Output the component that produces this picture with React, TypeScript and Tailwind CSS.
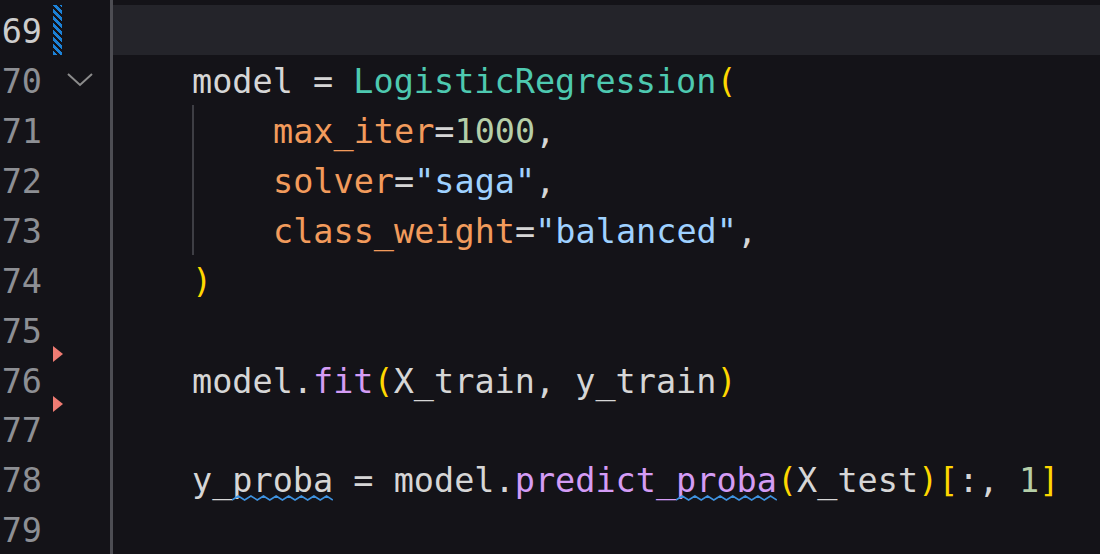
import React from 'react';

type Tok = { t: string; c?: string; squiggle?: boolean };

const C = {
  text: 'text-[#d6d6d6]',
  cls: 'text-[#4ec9b0]',
  paren: 'text-[#ffd700]',
  param: 'text-[#f29b5c]',
  num: 'text-[#b5cea8]',
  str: 'text-[#9fd1ff]',
  fn: 'text-[#d49cf5]',
};

interface Line {
  no: number;
  toks: Tok[];
  guide?: boolean;
}

const lines: Line[] = [
  { no: 69, toks: [] },
  {
    no: 70,
    toks: [
      { t: 'model = ', c: C.text },
      { t: 'LogisticRegression', c: C.cls },
      { t: '(', c: C.paren },
    ],
  },
  {
    no: 71,
    guide: true,
    toks: [
      { t: 'max_iter', c: C.param },
      { t: '=', c: C.text },
      { t: '1000', c: C.num },
      { t: ',', c: C.text },
    ],
  },
  {
    no: 72,
    guide: true,
    toks: [
      { t: 'solver', c: C.param },
      { t: '=', c: C.text },
      { t: '"saga"', c: C.str },
      { t: ',', c: C.text },
    ],
  },
  {
    no: 73,
    guide: true,
    toks: [
      { t: 'class_weight', c: C.param },
      { t: '=', c: C.text },
      { t: '"balanced"', c: C.str },
      { t: ',', c: C.text },
    ],
  },
  { no: 74, toks: [{ t: ')', c: C.paren }] },
  { no: 75, toks: [] },
  {
    no: 76,
    toks: [
      { t: 'model.', c: C.text },
      { t: 'fit', c: C.fn },
      { t: '(', c: C.paren },
      { t: 'X_train, y_train', c: C.text },
      { t: ')', c: C.paren },
    ],
  },
  { no: 77, toks: [] },
  {
    no: 78,
    toks: [
      { t: 'y_', c: C.text },
      { t: 'proba', c: C.text, squiggle: true },
      { t: ' = model.', c: C.text },
      { t: 'predict_', c: C.fn },
      { t: 'proba', c: C.fn, squiggle: true },
      { t: '(', c: C.paren },
      { t: 'X_test', c: C.text },
      { t: ')', c: C.paren },
      { t: '[', c: C.paren },
      { t: ':, ', c: C.text },
      { t: '1', c: C.num },
      { t: ']', c: C.paren },
    ],
  },
  { no: 79, toks: [] },
];

function Squiggle() {
  return (
    <svg className="absolute left-0 right-0 bottom-[-3px] w-full h-[6px]" preserveAspectRatio="none" viewBox="0 0 100 6">
      <path
        d="M0 5 L6.25 1 L12.5 5 L18.75 1 L25 5 L31.25 1 L37.5 5 L43.75 1 L50 5 L56.25 1 L62.5 5 L68.75 1 L75 5 L81.25 1 L87.5 5 L93.75 1 L100 5"
        fill="none"
        stroke="#3f93e0"
        strokeWidth="1.5"
        vectorEffect="non-scaling-stroke"
      />
    </svg>
  );
}

function Chevron() {
  return (
    <svg width="26" height="14" viewBox="0 0 26 14" className="text-[#8c8c8c]">
      <path d="M1 1 L13 12 L25 1" fill="none" stroke="currentColor" strokeWidth="2" />
    </svg>
  );
}

function Triangle() {
  return <div className="w-0 h-0 border-y-[8px] border-y-transparent border-l-[10px] border-l-[#ef7b72]" />;
}

export default function App() {
  return (
    <div
      className="w-[1100px] h-[554px] overflow-hidden bg-[#141318] flex pt-[5px]"
      style={{ fontFamily: '"DejaVu Sans Mono", "Liberation Mono", monospace' }}
    >
      {/* gutter */}
      <div className="w-[110px] shrink-0 flex flex-col">
        {lines.map((ln) => (
          <div key={ln.no} className="relative h-[50px] flex items-center">
            <span
              className={`w-[42px] pt-[4px] text-right text-[33.5px] leading-none ${
                ln.no === 69 ? 'text-[#cdcdcd]' : 'text-[#8d8f94]'
              }`}
            >
              {ln.no}
            </span>
            <div className="w-[11px]" />
            <div className="w-[9px] h-full">
              {ln.no === 69 && (
                <div className="h-full w-full bg-[repeating-linear-gradient(45deg,#1c82d8_0px,#1c82d8_3px,#141318_3px,#141318_5px)]" />
              )}
            </div>
            <div className="ml-[5px] flex items-center">{ln.no === 70 && <Chevron />}</div>
            {(ln.no === 76 || ln.no === 77) && (
              <div className="absolute left-[53px] top-[-8px]">
                <Triangle />
              </div>
            )}
          </div>
        ))}
      </div>
      {/* separator */}
      <div className="w-[3px] shrink-0 bg-[#4d4d53] -mt-[5px]" />
      {/* code */}
      <div className="flex-1 flex flex-col">
        {lines.map((ln) => (
          <div
            key={ln.no}
            className={`h-[50px] flex items-center pl-[79px] pt-[4px] text-[33.5px] leading-none whitespace-pre ${
              ln.no === 69 ? 'bg-[#24242a]' : ''
            }`}
          >
            {ln.guide && (
              <div className="relative h-full">
                <div className="absolute left-0 top-[-4px] h-[50px] w-[2px] bg-[#3e3e44]" />
              </div>
            )}
            {ln.guide && <span className="w-[81px] shrink-0" />}
            {ln.toks.map((tk, i) => (
              <span key={i} className={`relative ${tk.c ?? C.text}`}>
                {tk.t}
                {tk.squiggle && <Squiggle />}
              </span>
            ))}
          </div>
        ))}
      </div>
    </div>
  );
}
